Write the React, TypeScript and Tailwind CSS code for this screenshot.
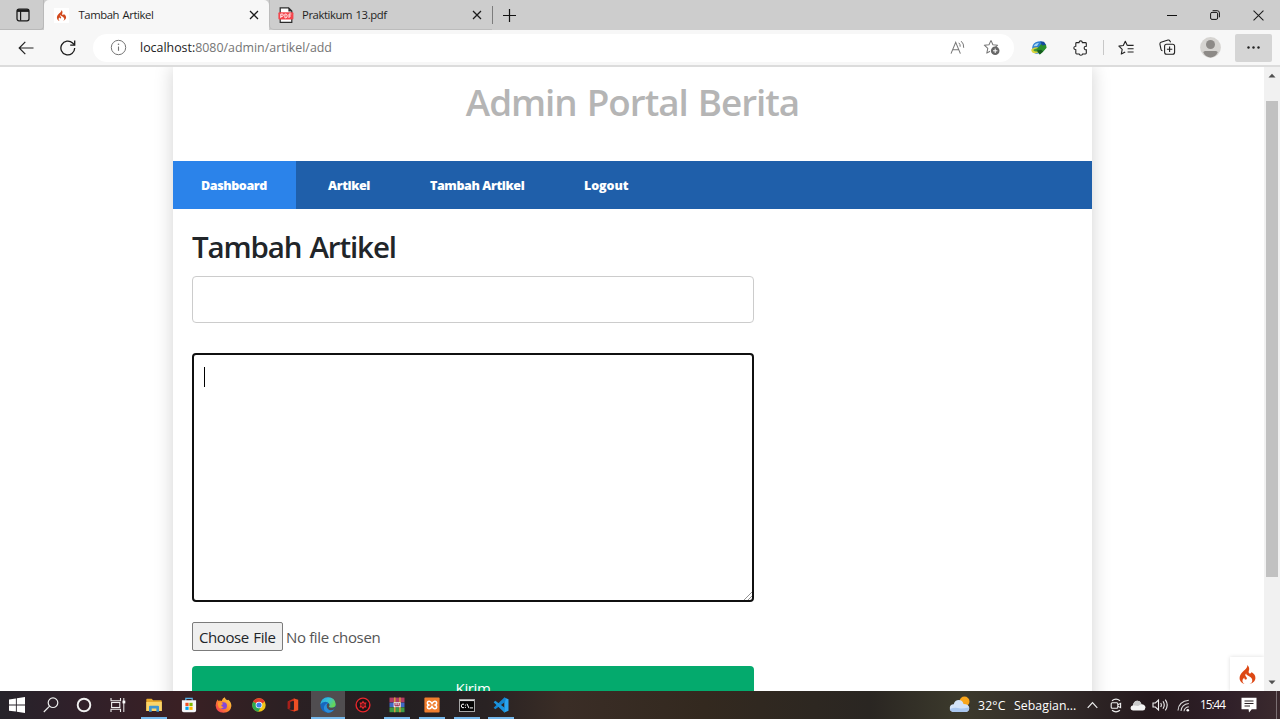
import type { ReactNode } from "react";
import { SiCodeigniter } from "react-icons/si";

type IconProps = { w: number; h: number; box?: string; className?: string; children: ReactNode };

function Icon({ w, h, box, className = "", children }: IconProps) {
  return (
    <svg
      width={w}
      height={h}
      viewBox={box ?? `0 0 ${w} ${h}`}
      fill="none"
      stroke="none"
      className={`block shrink-0 ${className}`}
    >
      {children}
    </svg>
  );
}

function CloseIcon({ size }: { size: number }) {
  return (
    <Icon w={size} h={size} box="0 0 10 10">
      <path d="M1 1l8 8M9 1L1 9" stroke="#1b1b1b" strokeWidth="1.25" />
    </Icon>
  );
}

function TitleBar() {
  return (
    <header className="flex h-[30px] shrink-0 bg-[#cdcdcd]">
      <div className="flex w-11 items-center justify-center rounded-br-[4px] border-r border-b border-[#b9b9b9]">
        <Icon w={14} h={14} className="ml-[2px]">
          <rect x="1" y="1.2" width="12" height="11.6" rx="2" stroke="#1b1b1b" strokeWidth="1.3" />
          <path d="M1 2.7h12" stroke="#1b1b1b" strokeWidth="2.4" />
          <path d="M4.6 3v9.5" stroke="#1b1b1b" strokeWidth="1.2" />
        </Icon>
      </div>
      <div className="flex w-[225px] items-center rounded-t-[5px] bg-[#f7f7f7] pl-[10px]">
        <div className="flex h-[15px] w-[15px] items-center justify-center bg-white">
          <SiCodeigniter className="h-[11px] w-[11px] text-[#d2491d]" />
        </div>
        <span className="ml-[9.500px] w-[170px] whitespace-nowrap text-[11.3px] tracking-[-0.42px] text-[#1f1f1f] [word-spacing:1px]">
          Tambah Artikel
        </span>
        <CloseIcon size={10} />
      </div>
      <div className="flex w-[223px] items-center rounded-bl-[5px] border-b border-l border-[#bcbcbc] pl-[8px]">
        <Icon w={16} h={16} className="mt-px">
          <path d="M2.2 15.3V.8h8.4l3.2 3.2v11.3z" fill="#fff" stroke="#2b2b2b" strokeWidth="1.2" />
          <path d="M10.4.6v3.8h3.6z" fill="#2b2b2b" />
          <rect x="0.4" y="5.2" width="15" height="7.4" rx="1" fill="#f4454c" />
          <path
            d="M2.8 11V7h1.5q1 0 1 1.2t-1 1.2H2.8M6.9 7v3.8h.8q1.5 0 1.5-1.9T7.7 7zM11 11V7h2.3M11 9h1.9"
            stroke="#fff"
            strokeWidth="0.9"
          />
        </Icon>
        <span className="ml-[8px] w-[170px] whitespace-nowrap pt-[2px] text-[11.3px] tracking-[-0.42px] text-[#1f1f1f] [word-spacing:1px]">
          Praktikum 13.pdf
        </span>
        <div className="pt-px">
          <CloseIcon size={10} />
        </div>
      </div>
      <div className="my-[6px] w-px bg-[#7c7c7c]" />
      <div className="flex w-[32px] items-center justify-center">
        <Icon w={13} h={13}>
          <path d="M6.5 0v13M0 6.5h13" stroke="#111" strokeWidth="1.2" />
        </Icon>
      </div>
      <div className="ml-auto flex items-center pr-[16px]">
        <Icon w={10} h={10}>
          <path d="M0 5.5h10" stroke="#111" strokeWidth="1" />
        </Icon>
        <Icon w={10} h={10} className="ml-[33px]">
          <rect x="0.6" y="2.4" width="7" height="7" rx="1.4" stroke="#111" strokeWidth="1" />
          <path d="M2.6.7h4.6q2.2 0 2.2 2.2v4.4" stroke="#111" strokeWidth="1" />
        </Icon>
        <Icon w={11} h={11} box="0 0 10 10" className="ml-[33px]">
          <path d="M.5.5l9 9M9.5.5l-9 9" stroke="#1b1b1b" strokeWidth="0.95" />
        </Icon>
      </div>
    </header>
  );
}

function Toolbar() {
  return (
    <div className="flex h-[37px] shrink-0 items-center border-b-2 border-[#dcdcdc] bg-[#f7f7f7]">
      <Icon w={16} h={14} className="ml-[18px]">
        <path d="M7.3.8L1.2 7l6.1 6.2M1.2 7H15.5" stroke="#222" strokeWidth="1.2" />
      </Icon>
      <Icon w={16} h={16} className="ml-[25.500px]">
        <path d="M14.7 8A6.9 6.9 0 1 1 12.6 3L14.6 5" stroke="#1b1b1b" strokeWidth="1.3" />
        <path d="M14.7.6V5.1H10.2" stroke="#1b1b1b" strokeWidth="1.3" />
      </Icon>
      <div className="ml-[17.500px] flex h-[28px] w-[921px] items-center rounded-full bg-white pl-[17px]">
        <Icon w={17} h={17}>
          <circle cx="8.5" cy="8.5" r="7.2" stroke="#747474" strokeWidth="1" />
          <path d="M8.5 7.5v4.3" stroke="#747474" strokeWidth="1.1" />
          <circle cx="8.5" cy="5.3" r=".8" fill="#747474" />
        </Icon>
        <span className="ml-[13px] pt-[2px] whitespace-nowrap text-[12.4px] text-[#757575]">
          <span className="text-[#222]">localhost:</span>8080/admin/artikel/add
        </span>
        <Icon w={16} h={15} className="ml-auto">
          <path d="M1 13.6L5.7 2.4 10.4 13.6M2.6 9.8h6.2" stroke="#777" strokeWidth="1.05" />
          <path d="M8.8 2.8q1.6 1.4 1.4 3.9M11.2 1.2q2.8 2.4 2.5 6.6" stroke="#777" strokeWidth="1" />
        </Icon>
        <Icon w={17} h={17} className="mr-[14px] ml-[17px]">
          <path
            d="M8 1.4l1.9 4.3 4.7.5-3 3M8 1.4L6 5.7l-4.7.5 3.5 3.2-1 4.7L7 12.2"
            stroke="#777"
            strokeWidth="1.05"
            strokeLinejoin="round"
          />
          <circle cx="12.2" cy="11.8" r="4.3" fill="#666" />
          <path d="M12.2 9.6V14M10 11.8h4.4" stroke="#fff" strokeWidth="1" />
        </Icon>
      </div>
      <Icon w={16} h={16} className="ml-[17px]">
        <path d="M1.2 7.4Q1.8 2.6 7 1.6q5.6-1.4 7.2 3.2 1 4.8-2.8 7.2-5.4 3-8.6.8Q1 10.8 1.2 7.4z" fill="#2f7fd0" />
        <path d="M.3 9.600Q3 6.600 7 7.400l1 4.600q-4 2.200-6.600.4Q0 11.200.3 9.600z" fill="#d9d33a" />
        <path d="M2.200 10q2-2 4.400-1.500l.4 2.500q-2.800 1.500-4.800-1z" fill="#3d9a35" />
        <path d="M8.200 6.400l2.400-3 4.400 1 .6 3.400-3.600 4-3.200 2.800-1.600-3.400-1.800-2z" fill="#2c8f2b" />
        <path d="M5.600 10.400l4.600-.6 2 1.600-3.400 3.200z" fill="#145c1d" />
        <path d="M9.200 1.600l3.800.2 2 3-3.800.6z" fill="#164a9c" />
        <path d="M2.500 6.200q2-3.200 5.400-3.100L6 6z" fill="#a8d9f3" />
      </Icon>
      <Icon w={15} h={16} className="ml-[26px]">
        <path
          d="M3.600 2.600H6Q6.200.9 7.700.9T9.400 2.600H12.400q.9 0 .9.9V6.300Q11.200 6.200 11.200 8T13.300 9.700V13.100q0 .9-.9.900H9.600Q9.500 15.200 7.900 15.200T6.200 14H3.700q-.9 0-.9-.9V9.700Q.8 9.600.8 8T2.800 6.300V3.500q0-.9.8-.9z"
          stroke="#222"
          strokeWidth="1.1"
        />
      </Icon>
      <div className="ml-[15px] h-[15px] w-px bg-[#c8c8c8]" />
      <Icon w={17} h={16} className="ml-[14px]">
        <path
          d="M9.300 5.400L7.300 1.200 5.300 5.500.900 6.100l3.300 3.200L3.300 14l3.900-2.100M9.300 5.400H15.600M9.600 8.700h6M9.600 12h6"
          stroke="#222"
          strokeWidth="1.100"
          strokeLinejoin="round"
        />
      </Icon>
      <Icon w={17} h={17} className="ml-[24px]">
        <rect x="5.600" y="5.300" width="10" height="10" rx="2" stroke="#222" strokeWidth="1.100" />
        <path d="M10.600 7.600v5.400M7.900 10.300h5.400" stroke="#222" strokeWidth="1.100" />
        <path d="M3.500 11.700Q2.300 11.500 2 10.300L.900 5.100Q.700 3.800 2 3.300L9 1q1.300-.3 1.900.9l.7 1.400" stroke="#222" strokeWidth="1.100" />
      </Icon>
      <Icon w={21} h={21} className="ml-[24px]">
        <circle cx="10.500" cy="10.500" r="10.400" fill="#d6d4d1" />
        <circle cx="10.500" cy="7.500" r="4.500" fill="#8d8a87" />
        <path d="M3.300 15.600Q3.300 14 5.200 14h10.600q1.900 0 1.900 1.600-2.200 4.700-7.200 4.900-5-.2-7.200-4.900z" fill="#8d8a87" />
      </Icon>
      <div className="ml-[14px] flex h-[28px] w-[37px] items-center justify-center rounded-[2px] bg-[#d5d5d5]">
        <Icon w={13} h={3}>
          <circle cx="1.500" cy="1.500" r="1.200" fill="#222" />
          <circle cx="6.500" cy="1.500" r="1.200" fill="#222" />
          <circle cx="11.500" cy="1.500" r="1.200" fill="#222" />
        </Icon>
      </div>
    </div>
  );
}

function Page() {
  return (
    <main className="relative flex min-h-0 flex-1 overflow-hidden bg-white">
      <div className="ml-[173px] flex h-[700px] w-[919px] shrink-0 flex-col bg-white shadow-[0_0_18px_rgba(0,0,0,0.18)]">
        <h1 className="flex h-[94px] shrink-0 justify-center pt-[8px] text-[36.8px] leading-[54px] font-semibold tracking-[-1.02px] text-[#b5b5b5] [word-spacing:1.500px]">
          Admin Portal Berita
        </h1>
        <nav className="flex h-[48px] shrink-0 items-center bg-[#1f5faa] text-[12.500px] leading-[18px] font-extrabold tracking-[-0.4px] text-white">
          <a className="flex h-full w-[123px] items-center bg-[#2b83ea] pt-[2px] pl-[28px]">Dashboard</a>
          <a className="w-[102px] pt-[2px] pl-[32px]">Artikel</a>
          <a className="w-[154px] pt-[2px] pl-[32px] whitespace-nowrap">Tambah Artikel</a>
          <a className="pt-[2px] pl-[32px] tracking-[-0.1px]">Logout</a>
        </nav>
        <form className="flex w-[600px] flex-col pl-[19px]">
          <h2 className="mt-[17px] h-[50px] text-[29.500px] leading-[42px] font-semibold tracking-[-1.12px] whitespace-nowrap text-[#212529] [word-spacing:1.500px]">
            Tambah Artikel
          </h2>
          <div className="h-[47px] w-[562px] rounded-[4px] border border-[#cccccc]" />
          <div className="mt-[30px] flex h-[249px] w-[562px] rounded-[4px] border-2 border-[#101010] pt-[12px] pl-[10px]">
            <div className="h-[20px] w-px bg-black" />
            <Icon w={9} h={9} className="mt-auto ml-auto">
              <path d="M1 9L9 1M5 9l4-4" stroke="#777" strokeWidth="0.8" />
            </Icon>
          </div>
          <div className="mt-[20px] flex h-[29px] items-center text-[15px] whitespace-nowrap">
            <div className="flex h-[29px] w-[91px] items-center rounded-[2px] border border-[#7b7b7b] bg-[#efefef] pt-px pl-[6px] tracking-[-0.4px] text-[#212529] [word-spacing:1px]">
              Choose File
            </div>
            <span className="ml-[3px] pt-px tracking-[-0.36px] text-[#555]">No file chosen</span>
          </div>
          <div className="mt-[15px] flex h-[44px] w-[562px] items-center justify-center rounded-[4px] bg-[#04aa6d] text-[15px] tracking-[-0.4px] text-white">
            Kirim
          </div>
        </form>
      </div>
      <div className="absolute right-[16px] bottom-0 flex h-[34px] w-[34px] items-center justify-center bg-white shadow-[0_0_4px_rgba(0,0,0,0.14)]">
        <SiCodeigniter className="h-[19px] w-[19px] text-[#dd4814]" />
      </div>
      <div className="relative ml-auto flex w-4 shrink-0 flex-col items-center bg-[#f1f1f1]">
        <Icon w={8} h={5} className="mt-[6px]">
          <path d="M.5 4.500L4 .7l3.500 3.800z" fill="#505050" />
        </Icon>
        <div className="mt-[23px] h-[476px] w-[12px] bg-[#c1c1c1]" />
        <Icon w={8} h={5} className="mt-auto mb-[6px]">
          <path d="M.5.500L4 4.300 7.500.500z" fill="#505050" />
        </Icon>
      </div>
    </main>
  );
}

function AppCell({ running, active, children }: { running?: boolean; active?: boolean; children: ReactNode }) {
  return (
    <div className={`flex h-full w-[34.700px] flex-col items-center ${active ? "bg-[#504d50]" : ""}`}>
      <div className="flex h-[26px] items-center pt-[2px]">{children}</div>
      <div className={`h-[2px] ${active ? "w-full" : "w-[26px]"} ${running ? "bg-[#76b9ed]" : ""}`} />
    </div>
  );
}

function Taskbar() {
  return (
    <footer className="flex h-7 shrink-0 items-center bg-[linear-gradient(90deg,#26232a_0%,#30202a_6%,#3a2024_14%,#2c2023_22%,#241f22_30%,#292223_38%,#3a2d26_44%,#33291f_55%,#2a2622_68%,#3c3a2c_75%,#332c2a_82%,#25191d_90%,#302029_96%,#3b2a2e_100%)]">
      <Icon w={16} h={16} className="ml-[9px]">
        <path d="M0 2.400L6.900 1.400V7.600H0zM7.800 1.300L16 .1V7.600H7.800zM0 8.500H6.900v6.100L0 13.700zM7.800 8.500H16V15.900L7.800 14.800z" fill="#fff" />
      </Icon>
      <Icon w={16} h={16} className="ml-[18px]">
        <circle cx="10" cy="5.700" r="4.800" stroke="#eee" strokeWidth="1.200" />
        <path d="M6.600 9.200L.8 15" stroke="#eee" strokeWidth="1.200" />
      </Icon>
      <Icon w={16} h={16} className="ml-[17px]">
        <circle cx="8" cy="8" r="6.300" stroke="#f0f0f0" strokeWidth="1.900" />
      </Icon>
      <Icon w={17} h={16} className="ml-[18px]">
        <path d="M1 1v2.800h9.500V1M1 15v-2.800h9.500V15" stroke="#eee" strokeWidth="1.100" />
        <rect x="1.600" y="5.500" width="8.200" height="5" stroke="#eee" strokeWidth="1.100" />
        <path d="M13.800 1v14" stroke="#eee" strokeWidth="1" />
        <rect x="12.500" y="3.600" width="2.800" height="2.800" fill="#fff" />
      </Icon>
      <div className="ml-[10.100px] flex h-full">
        <AppCell running>
          <Icon w={16} h={14}>
            <path d="M.3 1.500Q.3.700 1.100.700H5.600l1.500 1.600H15q.8 0 .8.800V13H.3z" fill="#e8a92c" />
            <path d="M.3 4h15.500v9H.3z" fill="#fbd56a" />
            <path d="M3 13.700V8.800q0-1 1-1h8q1 0 1 1v4.900h-2.600v-3.200H5.700v3.200z" fill="#3f96d2" />
          </Icon>
        </AppCell>
        <AppCell>
          <Icon w={16} h={16}>
            <path d="M4.800 4V1.300h6.400V4" stroke="#58b3e8" strokeWidth="1.200" />
            <path d="M.9 3.200h14.200v10.300q0 1.800-1.800 1.800H2.700q-1.800 0-1.800-1.800z" fill="#f4f6f8" />
            <path d="M4.400 5.800h3.200V9H4.400z" fill="#f25022" />
            <path d="M8.400 5.800h3.200V9H8.400z" fill="#7fba00" />
            <path d="M4.400 9.700h3.200v3.200H4.400z" fill="#00a4ef" />
            <path d="M8.400 9.700h3.200v3.200H8.400z" fill="#ffb900" />
          </Icon>
        </AppCell>
        <AppCell>
          <Icon w={17} h={16}>
            <defs>
              <linearGradient id="fox" x1="1" y1="0" x2="0" y2="1">
                <stop offset="0" stopColor="#ffe14a" />
                <stop offset=".5" stopColor="#ff8a2a" />
                <stop offset="1" stopColor="#f0275f" />
              </linearGradient>
            </defs>
            <path d="M8.500 15.800q-7.200-.2-7.900-7.300Q.6 5 2.700 2.500L3.600 4q1.200-.8 3 0Q7.700.6 9.800.2q.2 2 2.400 3l1-.4q3.200 2.400 3.200 6.200-.8 6.600-7.900 6.800z" fill="url(#fox)" />
            <circle cx="8.500" cy="8.700" r="3.500" fill="#8547d8" />
            <path d="M3 5.500q2.600-.8 4.800 1 .5 1-1.600 1.600.2 2 2.600 1.900-2.600 2.600-5 .4Q2.400 8.500 3 5.500z" fill="#ff9a2e" />
          </Icon>
        </AppCell>
        <AppCell>
          <Icon w={14} h={14}>
            <circle cx="7" cy="7" r="6.700" fill="#f2c318" />
            <path d="M7 7L1.100 3.700A6.800 6.800 0 0 1 12.900 3.700z" fill="#e33b2e" />
            <path d="M7 7L1.100 3.700A6.700 6.700 0 0 0 6.200 13.700L9 9z" fill="#2da94f" />
            <circle cx="7" cy="7" r="3.300" fill="#fff" />
            <circle cx="7" cy="7" r="2.600" fill="#3d7eea" />
          </Icon>
        </AppCell>
        <AppCell>
          <Icon w={12} h={14}>
            <path d="M.8 3.600L6.900.4 8.500.9V12.900L6.900 13.600.8 11.400 6.300 11.900V3L3.400 4v6L.8 11z" fill="#c92f1a" />
            <path d="M6.900.4l4.300 1.300v10.600l-4.300 1.300z" fill="#ee4f25" />
            <path d="M.8 3.600L3.400 2.200V10L.8 11z" fill="#a81f1b" />
            <path d="M3.400 4L6.900 3v9L3.400 10z" fill="#2a1f22" />
          </Icon>
        </AppCell>
        <AppCell running active>
          <Icon w={16} h={16}>
            <defs>
              <linearGradient id="wave" x1="0" y1="0" x2="1" y2=".5">
                <stop offset="0" stopColor="#2a9fe0" />
                <stop offset=".5" stopColor="#35c1d8" />
                <stop offset="1" stopColor="#67d653" />
              </linearGradient>
            </defs>
            <circle cx="8" cy="8" r="7.700" fill="#1767bd" />
            <path d="M.3 7.400Q1.200.5 8 .3q7 .2 7.700 6.900-.2 3.400-3.700 3.600-3.200 0-3-1.300 1-1.300.2-2.700Q8 5 5.400 4.800 1.800 5 .3 7.400z" fill="url(#wave)" />
            <path d="M9 9.500q-.4 1.300 3 1.300 1.800 0 3-1 .5 1.300-1 2.700-2.400 1.400-5 .4-3-1.500-2.500-4.300Q7 6.800 8.600 6.300q1.300 1.500.4 3.200z" fill="#504d50" />
            <path d="M6.600 8.600q-.3 2.800 2.400 4.300 2.600 1 5-.4-2.400 3.300-6.200 3.200Q3.600 14.400 3.900 10.600 4.300 7 8 6.200 6.700 7.200 6.600 8.600z" fill="#2a8edb" />
          </Icon>
        </AppCell>
        <AppCell>
          <Icon w={16} h={16}>
            <circle cx="8" cy="8" r="6.900" fill="#1d1416" stroke="#e8262c" strokeWidth="1.400" />
            <path
              d="M8 3.600l1.200 1.900 2.400-.1-1.100 2.600 1.100 2.600-2.400-.1L8 12.400l-1.200-1.900-2.400.1L5.500 8 4.400 5.400l2.400.1z"
              fill="#e8262c"
            />
            <circle cx="8" cy="8" r="1.700" fill="#1d1416" />
            <circle cx="8" cy="8" r=".7" fill="#e8262c" />
          </Icon>
        </AppCell>
        <AppCell running>
          <Icon w={16} h={16}>
            <rect x=".5" y=".6" width="15" height="4.800" fill="#b33a62" />
            <rect x=".5" y="5.600" width="15" height="4.600" fill="#3f68c4" />
            <rect x=".5" y="10.400" width="15" height="4.800" fill="#3e9a43" />
            <path d="M5 .6h1.500v14.600H5zM10.200.6h1.500v14.600h-1.500z" fill="#d39a3d" />
            <rect x="4.600" y="5.200" width="7" height="5" fill="#eee" />
            <path d="M6 6v2.800h4.200V6M8.100 6v3" stroke="#9c2348" strokeWidth="1" />
          </Icon>
        </AppCell>
        <AppCell running>
          <Icon w={16} h={16}>
            <rect x=".4" y=".4" width="15.200" height="15.200" rx="1" fill="#f07e2e" />
            <path d="M8 6.500Q6.500 4 5 4.200 3.300 4.500 3.300 6q0 1.400 1.500 2-1.500.6-1.500 2 0 1.500 1.700 1.800Q6.500 12 8 9.500q1.500 2.500 3 2.300 1.700-.3 1.700-1.800 0-1.400-1.500-2 1.500-.6 1.500-2 0-1.500-1.700-1.800Q9.500 4 8 6.500z" stroke="#fff" strokeWidth="1.500" />
          </Icon>
        </AppCell>
        <AppCell running>
          <Icon w={16} h={13}>
            <rect x=".5" y=".5" width="15" height="12" fill="#050505" stroke="#a7a7a7" />
            <path d="M1 1.500h14" stroke="#ddd" strokeWidth="1.200" />
            <path d="M5 5.200Q2.300 4.500 2.300 6.900T5 8.700M6.400 5.600v1M6.400 7.900v1M8 4.800l2 4.400M11 8.900h3" stroke="#fff" strokeWidth="1" />
          </Icon>
        </AppCell>
        <AppCell running>
          <Icon w={16} h={16}>
            <path d="M11.300.5L15.500 2.300V13.700L11.300 15.500z" fill="#2aa5f0" />
            <path d="M11.300.5L13 1.300 12 5 2.300 12.200.600 10.700z" fill="#1585cf" />
            <path d="M.600 5.300L2.300 3.800 12 11v4.200l-.7.300z" fill="#1c93dc" />
          </Icon>
        </AppCell>
      </div>
      <div className="ml-auto flex h-full items-center text-white">
        <Icon w={22} h={17} className="mb-[2px]">
          <circle cx="15.500" cy="5.500" r="5" fill="#f8a51b" />
          <path d="M5 16Q.8 15.700.8 12T4.700 8.200Q6 4 9.700 4q4 .2 4.800 4 5.500 0 5.800 4.200-.2 3.600-3.800 3.800z" fill="#d3e3f8" />
          <path d="M5 16Q.8 15.700.8 13q5-2 8-1t11.300-.5q.1 4.200-3.600 4.500z" fill="#a9c7f0" />
        </Icon>
        <span className="ml-[7px] w-[36px] pt-[2px] text-[12.300px] tracking-[0.1px]">32°C</span>
        <span className="w-[73px] pt-[2px] text-[12.300px] tracking-[0.05px] whitespace-nowrap">Sebagian...</span>
        <Icon w={11} h={8}>
          <path d="M.7 6.800L5.500 1.700l4.800 5.100" stroke="#eee" strokeWidth="1.200" />
        </Icon>
        <Icon w={12} h={15} className="ml-[12px]">
          <path d="M2 2.700Q6-.4 10 2.700M2 12.300q4 3.100 8 0" stroke="#eee" strokeWidth="1.100" />
          <rect x="1.200" y="4.800" width="6.600" height="5.400" rx="1" stroke="#eee" strokeWidth="1.100" />
          <path d="M8 6.700l2.600-1.400v4.400L8 8.300" stroke="#eee" strokeWidth="1.100" />
        </Icon>
        <Icon w={16} h={11} className="ml-[8px]">
          <path d="M3 10.500Q.5 10.300.5 8T3 5.300Q3.800 1 7.300.8q3 0 4.200 3.400 3.800.3 4 3.400-.2 2.700-2.700 2.900z" fill="#f3f3f3" />
          <path d="M3 5.300Q3.800 1 7.300.8q3 0 4.200 3.400L8 6z" fill="#c9c9c9" />
        </Icon>
        <Icon w={17} h={14} className="ml-[6px]">
          <path d="M1 5h2.400L6.500 2v10L3.400 9H1z" stroke="#eee" strokeWidth="1.100" />
          <path d="M8.700 5q1.300 2 0 4M11 3.300q2.500 3.700 0 7.400M13.300 1.600q3.800 5.400 0 10.800" stroke="#eee" strokeWidth="1.100" />
        </Icon>
        <Icon w={13} h={13} className="ml-[8px]">
          <path d="M1 11.500Q1.700 2.300 11.800 1.300M4 12Q4.500 5.300 11.800 4.500M7 12.200q.4-3.800 4.800-4.500" stroke="#d9d9d9" strokeWidth="1.100" />
          <circle cx="10.800" cy="11.200" r="1.300" fill="#fff" />
        </Icon>
        <span className="ml-[10px] w-[25px] text-[11.700px] tracking-[-0.950px] whitespace-nowrap">15:44</span>
        <Icon w={16} h={16} className="ml-[16px]">
          <path d="M.5.800h15v11.400h-4.700L8 15.500 7.600 12.200H.5z" fill="#fff" />
          <path d="M3.500 4h9M3.500 6.500h9M3.500 9h5.500" stroke="#2b2225" strokeWidth="1" />
        </Icon>
        <div className="mr-[3px] ml-[19px] h-7 w-px bg-[#7a6f72]" />
      </div>
    </footer>
  );
}

export default function App() {
  return (
    <div className="flex h-[719px] w-[1280px] flex-col overflow-hidden bg-white font-['Open_Sans','Noto_Sans',sans-serif]">
      <TitleBar />
      <Toolbar />
      <Page />
      <Taskbar />
    </div>
  );
}
